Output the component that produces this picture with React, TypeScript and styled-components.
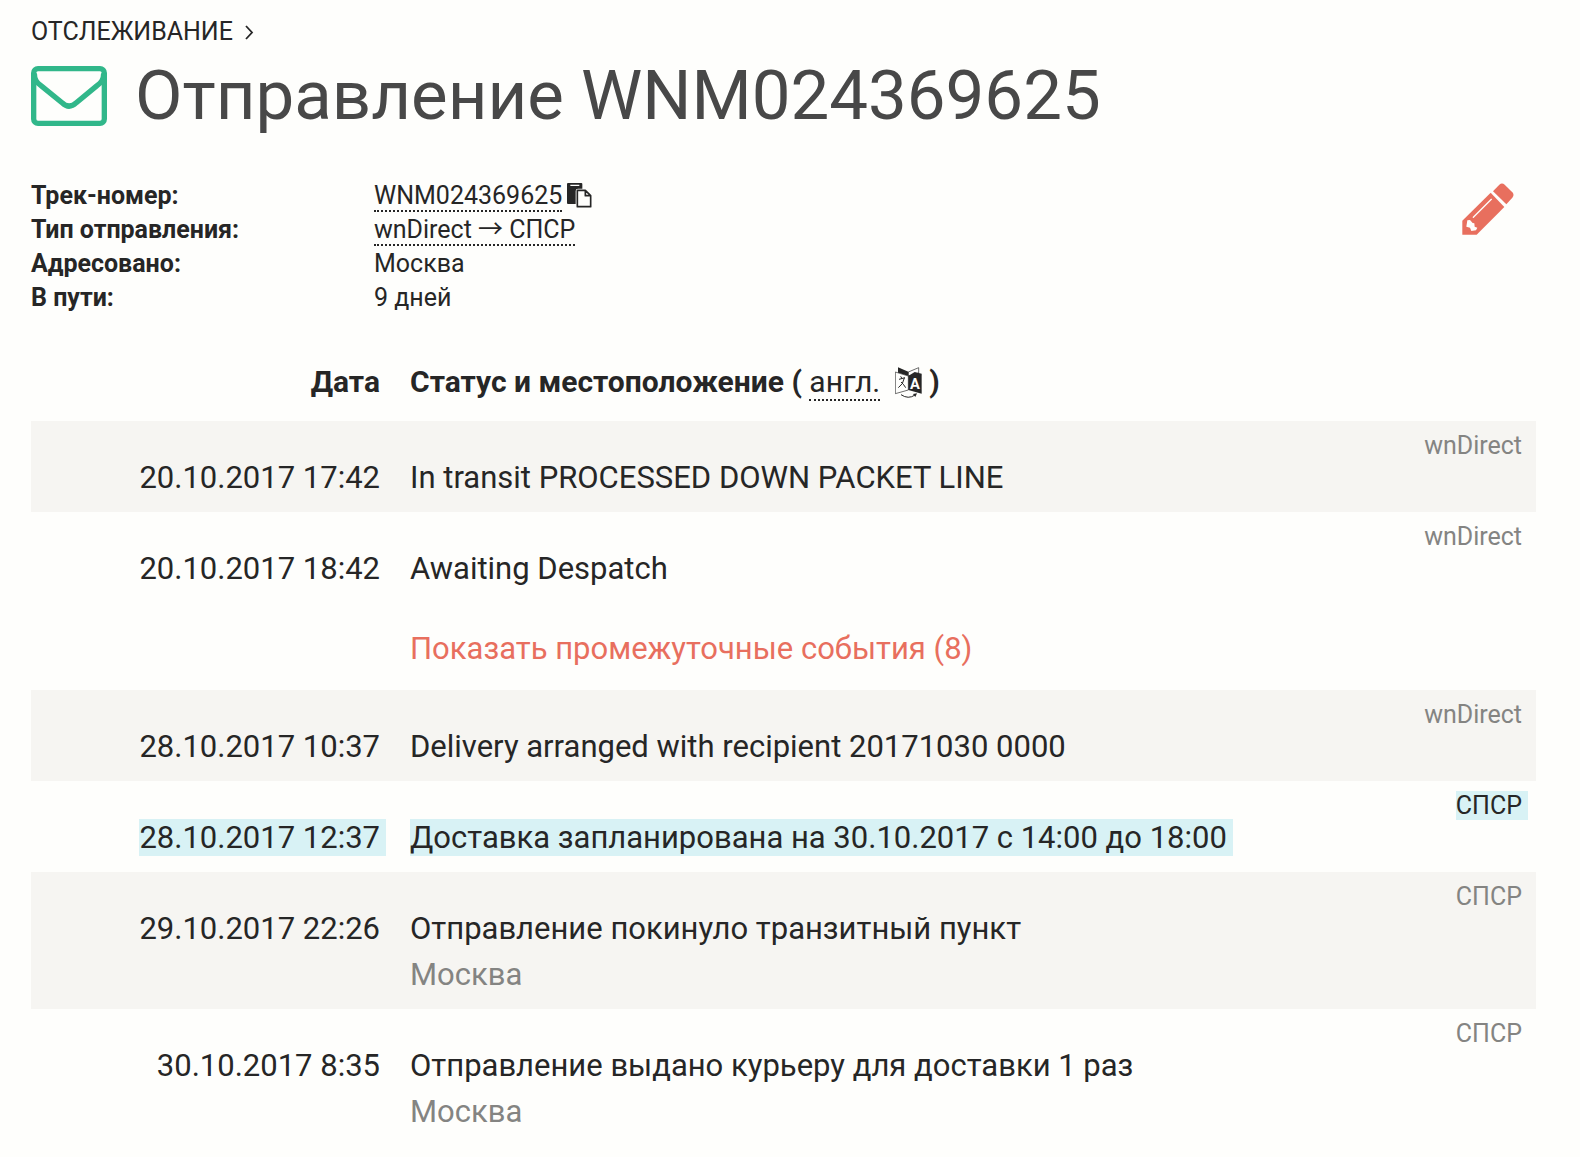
import React from "react";
import styled, { createGlobalStyle } from "styled-components";

const ink = "#262626";
const muted = "#848482";
const coral = "#e86f5e";
const green = "#31b78a";

const GlobalStyle = createGlobalStyle`
  * { box-sizing: border-box; }
  body {
    margin: 0;
    background: #fefefc;
    color: ${ink};
    font-family: Roboto, "Noto Sans CJK JP", "Liberation Sans", sans-serif;
    font-size: 25px;
    line-height: 34px;
  }
`;

const Page = styled.main`
  padding: 15px 44px 0 31px;
`;

const Breadcrumbs = styled.nav`
  display: flex;
  align-items: center;
  gap: 12px;
  text-transform: uppercase;
`;

const CrumbLink = styled.a`
  color: inherit;
  text-decoration: none;
`;

const TitleBar = styled.header`
  display: flex;
  align-items: center;
  gap: 28px;
  margin-bottom: 36px;
`;

const Title = styled.h1`
  margin: 0;
  color: #484848;
  font-size: 69px;
  font-weight: 400;
  line-height: 94px;
`;

const Summary = styled.section`
  display: flex;
  justify-content: space-between;
  align-items: flex-start;
`;

const Details = styled.dl`
  display: grid;
  grid-template-columns: 343px auto;
  grid-auto-rows: 34px;
  margin: 0;
`;

const Term = styled.dt`
  font-weight: 700;
`;

const Value = styled.dd`
  margin: 0;
`;

const HintLink = styled.a`
  border-bottom: 2px dotted ${ink};
  color: inherit;
  font-weight: 400;
  text-decoration: none;
`;

const IconButton = styled.button`
  display: inline-flex;
  padding: 0;
  border: 0;
  background: none;
  cursor: pointer;
`;

const CopyButton = styled(IconButton)`
  margin-left: 5px;
  vertical-align: -4px;
`;

const EditButton = styled(IconButton)`
  margin: 4px 22px 0 0;
  color: ${coral};
`;

const Events = styled.table`
  width: 100%;
  margin-top: 32px;
  border-collapse: collapse;
  font-size: 31px;
  line-height: 46px;
`;

const DateHead = styled.th`
  width: 364px;
  padding: 12px 15px 16px 0;
  font-size: 30px;
  text-align: right;
`;

const StatusHead = styled.th`
  padding: 12px 0 16px 15px;
  font-size: 30px;
  text-align: left;
`;

const EventRow = styled.tr<{ $shaded?: boolean }>`
  background: ${(p) => (p.$shaded ? "#f6f5f2" : "transparent")};
  vertical-align: top;
`;

const DateCell = styled.td`
  padding: 34px 15px 11px 0;
  text-align: right;
  white-space: nowrap;
`;

const StatusCell = styled.td`
  padding: 34px 0 11px 15px;
`;

const CarrierCell = styled.td`
  padding: 8px 14px 0 0;
  color: ${muted};
  font-size: 25px;
  line-height: 34px;
  text-align: right;
`;

const MoreCell = styled.td`
  padding: 23px 0 18px 15px;
`;

const Place = styled.div`
  color: ${muted};
`;

const Highlight = styled.mark`
  margin-right: -6px;
  padding-right: 6px;
  background: #d8f2f5;
  color: ${ink};
`;

const MoreButton = styled.button`
  display: block;
  padding: 0;
  border: 0;
  background: none;
  color: ${coral};
  font: inherit;
  cursor: pointer;
`;

const TranslateSvg = styled.svg`
  margin: 0 7px 0 15px;
  vertical-align: -6px;
`;

const Chevron = () => (
  <svg width="9" height="16" viewBox="0 0 9 16" fill="none" stroke={ink} strokeWidth="1.8" aria-hidden="true">
    <path d="M1 2l6 6.500-6 6.500" />
  </svg>
);

const Envelope = () => (
  <svg width="76" height="60" viewBox="0 0 228 180" fill="none" stroke={green} strokeWidth="16" aria-hidden="true">
    <rect x="8" y="8" width="212" height="164" rx="13" />
    <path d="M10 22C10 42 18 50 30 59L93 110Q114 131 136 110L198 59C210 50 218 42 218 22" />
  </svg>
);

const CopyIcon = () => (
  <svg width="25" height="25" viewBox="0 0 75 75" aria-hidden="true">
    <path fill={ink} fillRule="evenodd" d="M3 0H43Q46 0 46 3V17H33Q26 17 26 24V63H3Q0 63 0 60V3Q0 0 3 0ZM10 5V9H37V5Z" />
    <path fill="none" stroke={ink} strokeWidth="5" strokeLinejoin="round" d="M31 22H55L71 38V71H31ZM55 22V38H71" />
  </svg>
);

const Pencil = () => (
  <svg width="52" height="52" viewBox="0 0 156 156" aria-hidden="true">
    <path fill="currentColor" d="M93 25L112 5Q120-2 128 5L151 28Q158 36 151 44L133 64Z" />
    <path fill="currentColor" d="M86 29L127 72L44 155H1V113Z" />
    <path fill="#fefefc" d="M16 112L24 111L32 120L37 121L38 131L46 134L42 142L28 144L24 134L13 131Z" />
    <path stroke="#fefefc" strokeWidth="4" strokeLinecap="round" d="M34 103L88 49" />
  </svg>
);

const TranslateIcon = () => (
  <TranslateSvg width="27" height="31" viewBox="0 0 81 93" aria-hidden="true">
    <path fill={ink} d="M9 1L40 14L56 22L40 27L9 17Z" />
    <path fill="#fefefc" stroke={ink} strokeWidth="2" d="M40 15L71 2V18L40 27Z" />
    <path fill="#fefefc" stroke={ink} strokeWidth="2" d="M1 15L40 27V69L1 80Z" />
    <path fill={ink} d="M40 27L59 15L80 20V80L40 69Z" />
    <path fill="none" stroke={ink} strokeWidth="3" d="M12 37L30 32M17 28L21 35M28 33Q25 52 10 62M18 45Q25 50 32 62" />
    <text x="45" y="65" fill="#fefefc" fontSize="44" fontWeight="700">A</text>
    <path fill="none" stroke={ink} strokeWidth="3" d="M18 83Q40 98 60 84" />
    <path fill={ink} d="M66 79L54 81L61 90Z" />
  </TranslateSvg>
);

type TrackEvent = {
  date: string;
  status: string;
  place?: string;
  carrier: string;
  shaded?: boolean;
  highlighted?: boolean;
};

const firstEvents: TrackEvent[] = [
  { date: "20.10.2017 17:42", status: "In transit PROCESSED DOWN PACKET LINE", carrier: "wnDirect", shaded: true },
  { date: "20.10.2017 18:42", status: "Awaiting Despatch", carrier: "wnDirect" },
];

const lastEvents: TrackEvent[] = [
  { date: "28.10.2017 10:37", status: "Delivery arranged with recipient 20171030 0000", carrier: "wnDirect", shaded: true },
  { date: "28.10.2017 12:37", status: "Доставка запланирована на 30.10.2017 с 14:00 до 18:00", carrier: "СПСР", highlighted: true },
  { date: "29.10.2017 22:26", status: "Отправление покинуло транзитный пункт", place: "Москва", carrier: "СПСР", shaded: true },
  { date: "30.10.2017 8:35", status: "Отправление выдано курьеру для доставки 1 раз", place: "Москва", carrier: "СПСР" },
];

const Event = ({ event }: { event: TrackEvent }) => {
  const Text = event.highlighted ? Highlight : React.Fragment;
  return (
    <EventRow $shaded={event.shaded}>
      <DateCell><Text>{event.date}</Text></DateCell>
      <StatusCell>
        <Text>{event.status}</Text>
        {event.place && <Place>{event.place}</Place>}
      </StatusCell>
      <CarrierCell><Text>{event.carrier}</Text></CarrierCell>
    </EventRow>
  );
};

export default function App() {
  return (
    <Page>
      <GlobalStyle />
      <Breadcrumbs>
        <CrumbLink href="#tracking">Отслеживание</CrumbLink>
        <Chevron />
      </Breadcrumbs>
      <TitleBar>
        <Envelope />
        <Title>Отправление WNM024369625</Title>
      </TitleBar>
      <Summary>
        <Details>
          <Term>Трек-номер:</Term>
          <Value>
            <HintLink href="#number">WNM024369625</HintLink>
            <CopyButton type="button" aria-label="Скопировать"><CopyIcon /></CopyButton>
          </Value>
          <Term>Тип отправления:</Term>
          <Value><HintLink href="#type">wnDirect → СПСР</HintLink></Value>
          <Term>Адресовано:</Term>
          <Value>Москва</Value>
          <Term>В пути:</Term>
          <Value>9 дней</Value>
        </Details>
        <EditButton type="button" aria-label="Редактировать"><Pencil /></EditButton>
      </Summary>
      <Events>
        <thead>
          <tr>
            <DateHead scope="col">Дата</DateHead>
            <StatusHead scope="col" colSpan={2}>
              Статус и местоположение ( <HintLink href="#english">англ.</HintLink>
              <TranslateIcon />)
            </StatusHead>
          </tr>
        </thead>
        <tbody>
          {firstEvents.map((event) => <Event key={event.date} event={event} />)}
          <tr>
            <td />
            <MoreCell colSpan={2}>
              <MoreButton type="button">Показать промежуточные события (8)</MoreButton>
            </MoreCell>
          </tr>
          {lastEvents.map((event) => <Event key={event.date} event={event} />)}
        </tbody>
      </Events>
    </Page>
  );
}
